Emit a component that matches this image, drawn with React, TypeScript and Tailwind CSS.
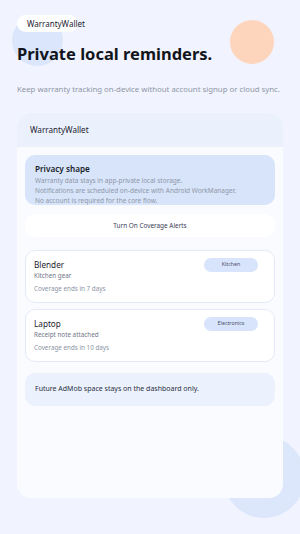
import React from "react";

type Item = {
    name: string;
    note: string;
    ends: string;
    tag: string;
};

const items: Item[] = [
    { name: "Blender", note: "Kitchen gear", ends: "Coverage ends in 7 days", tag: "Kitchen" },
    { name: "Laptop", note: "Receipt note attached", ends: "Coverage ends in 10 days", tag: "Electronics" },
];

const ItemCard = ({ item }: { item: Item }) => {
    return (
        <div className="flex h-[53px] items-start justify-between rounded-[10px] border border-[#e3e9f6] bg-white pl-[8px] pr-[16px]">
            <div className="flex flex-col pt-[8px]">
                <span className="text-[8.2px] leading-[12px] text-[#1e2330]">{item.name}</span>
                <span className="text-[6.3px] leading-[10px] text-[#6f7689]">{item.note}</span>
                <span className="mt-[3px] text-[6.3px] leading-[10px] text-[#8e94a5]">{item.ends}</span>
            </div>
            <div className="mt-[7px] flex h-[14px] w-[54px] items-center justify-center rounded-full bg-[#d8e4fb] text-[5.3px] text-[#4a5068]">
                {item.tag}
            </div>
        </div>
    );
};

export default function App() {
    return (
        <div
            className="relative h-[534px] w-[300px] overflow-hidden bg-[#f1f4fe]"
            style={{ fontFamily: '"Noto Sans", "Open Sans", sans-serif' }}
        >
            {/* background blobs */}
            <div className="absolute left-[12px] top-[15px] h-[51px] w-[51px] rounded-full bg-[#dbe6fc]" />
            <div className="absolute left-[230px] top-[20px] h-[44px] w-[44px] rounded-full bg-[#fdd5bd]" />
            <div className="absolute left-[223px] top-[436px] h-[82px] w-[82px] rounded-full bg-[#dde7fc]" />

            <div className="relative flex flex-col px-[17px] pt-[15px]">
                <div className="h-[17px] w-[61px] whitespace-nowrap rounded-full bg-white pl-[10px] text-[8px] leading-[17px] text-[#1e2330]">
                    WarrantyWallet
                </div>
                <h1 className="mt-[10px] text-[16.5px] font-bold leading-[24px] text-[#12151c]">
                    Private local reminders.
                </h1>
                <p className="mt-[17px] whitespace-nowrap text-[7.8px] leading-[12px] text-[#8e94a5]">
                    Keep warranty tracking on-device without account signup or cloud sync.
                </p>

                <div className="mt-[18px] flex h-[385px] flex-col overflow-hidden rounded-[14px] bg-[#f9fbff]">
                    <div className="flex h-[34px] items-center bg-[#eaf1fd] px-[13px] text-[8.1px] text-[#1e2330]">
                        WarrantyWallet
                    </div>
                    <div className="flex flex-col px-[8px] pt-[8px]">
                        <div className="h-[50px] overflow-hidden rounded-[10px] bg-[#d7e4fa] px-[10px] pt-[8px]">
                            <div className="text-[8.2px] font-semibold leading-[12px] text-[#1a1e28]">Privacy shape</div>
                            <div className="whitespace-nowrap pt-[1px] text-[6.5px] leading-[10px] text-[#8f97a8]">
                                <div>Warranty data stays in app-private local storage.</div>
                                <div>Notifications are scheduled on-device with Android WorkManager.</div>
                                <div>No account is required for the core flow.</div>
                            </div>
                        </div>

                        <button className="mt-[9px] h-[23px] rounded-[10px] bg-white text-[6.4px] text-[#3a4055]">
                            Turn On Coverage Alerts
                        </button>

                        <div className="mt-[13px] flex flex-col gap-[6px]">
                            {items.map((item) => (
                                <ItemCard key={item.name} item={item} />
                            ))}
                        </div>

                        <div className="mt-[11px] flex h-[33px] items-center rounded-[10px] bg-[#ecf1fe] px-[10px] text-[7px] text-[#2a3040]">
                            Future AdMob space stays on the dashboard only.
                        </div>
                    </div>
                </div>
            </div>
        </div>
    );
}
